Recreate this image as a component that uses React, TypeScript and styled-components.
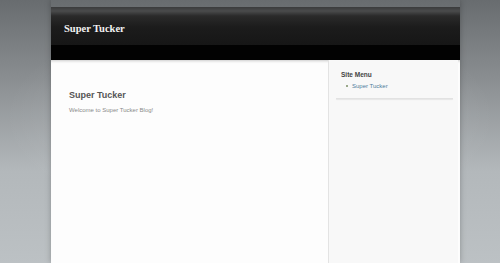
import React from 'react';
import styled, { createGlobalStyle } from 'styled-components';

const GlobalStyle = createGlobalStyle`
  html, body {
    margin: 0;
    padding: 0;
  }
  body {
    font-family: "Liberation Sans", Arial, sans-serif;
  }
`;

function App() {
  return (
    <PageWrapper>
      <GlobalStyle />
      <ContainerWrapper>
        <HeaderWrapper>
          <SiteTitle>Super Tucker</SiteTitle>
        </HeaderWrapper>
        <NavBar />
        <BodyWrapper>
          <MainWrapper>
            <PostTitle>Super Tucker</PostTitle>
            <PostText>Welcome to Super Tucker Blog!</PostText>
          </MainWrapper>
          <SidebarWrapper>
            <WidgetTitle>Site Menu</WidgetTitle>
            <MenuList>
              <MenuItem>
                <Bullet />
                <MenuLink href='#'>Super Tucker</MenuLink>
              </MenuItem>
            </MenuList>
            <WidgetDivider />
          </SidebarWrapper>
        </BodyWrapper>
      </ContainerWrapper>
    </PageWrapper>
  );
}

const PageWrapper = styled.div`
  width: 500px;
  height: 263px;
  overflow: hidden;
  background:
    radial-gradient(ellipse 70% 60% at 50% 45%, rgba(255, 255, 255, 0.25), rgba(255, 255, 255, 0) 70%),
    linear-gradient(180deg, #686c6f 0%, #8a8e91 30%, #b3b8bb 65%, #bcc1c4 100%);
`

const ContainerWrapper = styled.div`
  width: 409px;
  margin-left: 51px;
  padding-top: 7px;
  box-shadow: 0 0 6px rgba(0, 0, 0, 0.25);
  height: 256px;
  display: flex;
  flex-direction: column;
`

const HeaderWrapper = styled.div`
  height: 38px;
  display: flex;
  align-items: center;
  padding-left: 13px;
  box-sizing: border-box;
  background: linear-gradient(180deg, #3a3b3c 0px, #4a4b4c 4px, #2a2a2a 9px, #1c1c1c 20px, #161616 38px);
`

const SiteTitle = styled.div`
  font-family: "Liberation Serif", "Times New Roman", serif;
  font-weight: bold;
  font-size: 10.5px;
  color: #f2f2f2;
  margin-top: 4px;
`

const NavBar = styled.div`
  height: 15px;
  background: #020202;
`

const BodyWrapper = styled.div`
  flex: 1;
  display: flex;
  background: #fdfdfd;
  box-shadow: inset 0 3px 3px -2px rgba(0, 0, 0, 0.2);
`

const MainWrapper = styled.div`
  flex: 1;
  padding: 30px 18px 0;
`

const PostTitle = styled.div`
  font-weight: bold;
  font-size: 9px;
  color: #555555;
  margin-bottom: 7px;
`

const PostText = styled.div`
  font-size: 6px;
  color: #8a8a8a;
`

const SidebarWrapper = styled.div`
  width: 130px;
  margin-right: 2px;
  background: #f8f8f8;
  border-left: 1px solid #e3e3e3;
  padding: 11px 5px 0 7px;
  box-sizing: border-box;
`

const WidgetTitle = styled.div`
  font-weight: bold;
  font-size: 6.5px;
  color: #444444;
  padding-left: 5px;
  margin-bottom: 5px;
`

const MenuList = styled.ul`
  list-style: none;
  margin: 0;
  padding: 0 0 0 10px;
`

const MenuItem = styled.li`
  display: flex;
  align-items: center;
  gap: 4px;
`

const Bullet = styled.span`
  width: 2px;
  height: 2px;
  background: #9aa88a;
`

const MenuLink = styled.a`
  font-size: 6px;
  color: #4f7d9c;
  text-decoration: none;
`

const WidgetDivider = styled.div`
  margin-top: 9px;
  height: 1px;
  background: #e2e2e2;
  box-shadow: 0 1px 1px rgba(0, 0, 0, 0.08);
`

export default App;
